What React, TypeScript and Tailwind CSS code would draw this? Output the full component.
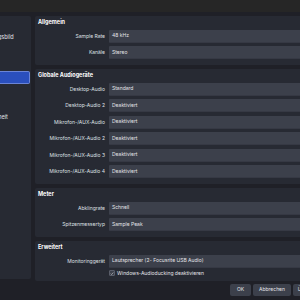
import React from 'react'

const sidebarItems = [
  'Allgemein',
  'Erscheinungsbild',
  'Stream',
  'Ausgabe',
  'Audio',
  'Video',
  'Hotkeys',
  'Barrierefreiheit',
  'Erweitert',
]

type Row = { label: string; value: string }

function Combo({ label, value }: Row) {
  return (
    <div className="flex items-center h-[13px]">
      <div className="w-[71px] shrink-0 text-right pr-[1px] text-[#dfe0e4]">{label}</div>
      <div className="ml-[3px] flex-1 h-full flex items-center pl-[3px] bg-[#3c404b] border-b border-[#363944] rounded-[1px] text-[#e4e5e9]">
        {value}
      </div>
    </div>
  )
}

function Group({ title, rows, children }: { title: string; rows: Row[]; children?: React.ReactNode }) {
  return (
    <div className="bg-[#272a33] rounded-[2px] pt-[2px] pb-[5.5px]">
      <div className="h-[9px] leading-[9px] pl-[3px] font-bold text-white text-[5.5px]">{title}</div>
      <div className="mt-[2.5px] flex flex-col gap-[3.5px]">
        {rows.map((r) => (
          <Combo key={r.label} {...r} />
        ))}
      </div>
      {children}
    </div>
  )
}

export default function App() {
  return (
    <div
      className="w-[300px] h-[300px] overflow-hidden bg-[#1f2027] flex flex-col text-[5px] leading-none"
      style={{ fontFamily: 'Inter, "Open Sans", sans-serif' }}
    >
      {/* title strip */}
      <div className="h-[12px] shrink-0 bg-[#262626]" />

      <div className="flex-1 flex gap-[4px] pt-[4px] min-h-0">
        {/* sidebar (scrolled, only the right end is visible) */}
        <div className="w-[31px] shrink-0 h-[263px] bg-[#272a33] rounded-r-[2px] overflow-hidden pt-[2px]">
          {sidebarItems.map((item) => (
            <div
              key={item}
              className={`h-[13.3px] mr-[1px] flex items-center rounded-r-[2px] ${
                item === 'Audio' ? 'bg-[#2a4fbd] border border-l-0 border-[#6a84d6]' : ''
              }`}
            >
              <span className="ml-[-31px] whitespace-nowrap text-[5.5px] text-[#e2e3e7]">{item}</span>
            </div>
          ))}
        </div>

        {/* content */}
        <div className="w-[400px] shrink-0 flex flex-col gap-[4.5px]">
          <Group
            title="Allgemein"
            rows={[
              { label: 'Sample Rate', value: '48 kHz' },
              { label: 'Kanäle', value: 'Stereo' },
            ]}
          />
          <Group
            title="Globale Audiogeräte"
            rows={[
              { label: 'Desktop-Audio', value: 'Standard' },
              { label: 'Desktop-Audio 2', value: 'Deaktiviert' },
              { label: 'Mikrofon-/AUX-Audio', value: 'Deaktiviert' },
              { label: 'Mikrofon-/AUX-Audio 2', value: 'Deaktiviert' },
              { label: 'Mikrofon-/AUX-Audio 3', value: 'Deaktiviert' },
              { label: 'Mikrofon-/AUX-Audio 4', value: 'Deaktiviert' },
            ]}
          />
          <Group
            title="Meter"
            rows={[
              { label: 'Abklingrate', value: 'Schnell' },
              { label: 'Spitzenmessertyp', value: 'Sample Peak' },
            ]}
          />
          <div className="bg-[#272a33] rounded-[2px] pt-[2px] pb-[2px]">
            <div className="h-[9px] leading-[9px] pl-[3px] font-bold text-white text-[5.5px]">Erweitert</div>
            <div className="mt-[2.5px]">
              <Combo label="Monitoringgerät" value="Lautsprecher (2- Focusrite USB Audio)" />
            </div>
            <div className="h-[11px] flex items-center pl-[74px] gap-[2px]">
              <div className="w-[6px] h-[6px] rounded-[1px] bg-[#3c404b] border border-[#5a5e6a] flex items-center justify-center">
                <svg viewBox="0 0 6 6" className="w-[5px] h-[5px]">
                  <path d="M1 3.2 L2.4 4.5 L5 1.5" stroke="#e4e5e9" strokeWidth="0.8" fill="none" />
                </svg>
              </div>
              <span className="text-[#e4e5e9]">Windows-Audioducking deaktivieren</span>
            </div>
          </div>
        </div>
      </div>

      {/* buttons */}
      <div className="h-[21px] shrink-0 flex items-center gap-[2px] pl-[230px]">
        <button className="w-[21px] h-[12px] shrink-0 bg-[#3c404b] rounded-[2px] text-[#e4e5e9]">OK</button>
        <button className="w-[38px] h-[12px] shrink-0 bg-[#3c404b] rounded-[2px] text-[#e4e5e9]">Abbrechen</button>
        <button className="w-[40px] h-[12px] shrink-0 bg-[#3c404b] rounded-[2px] text-[#e4e5e9]">Übernehmen</button>
      </div>
    </div>
  )
}
